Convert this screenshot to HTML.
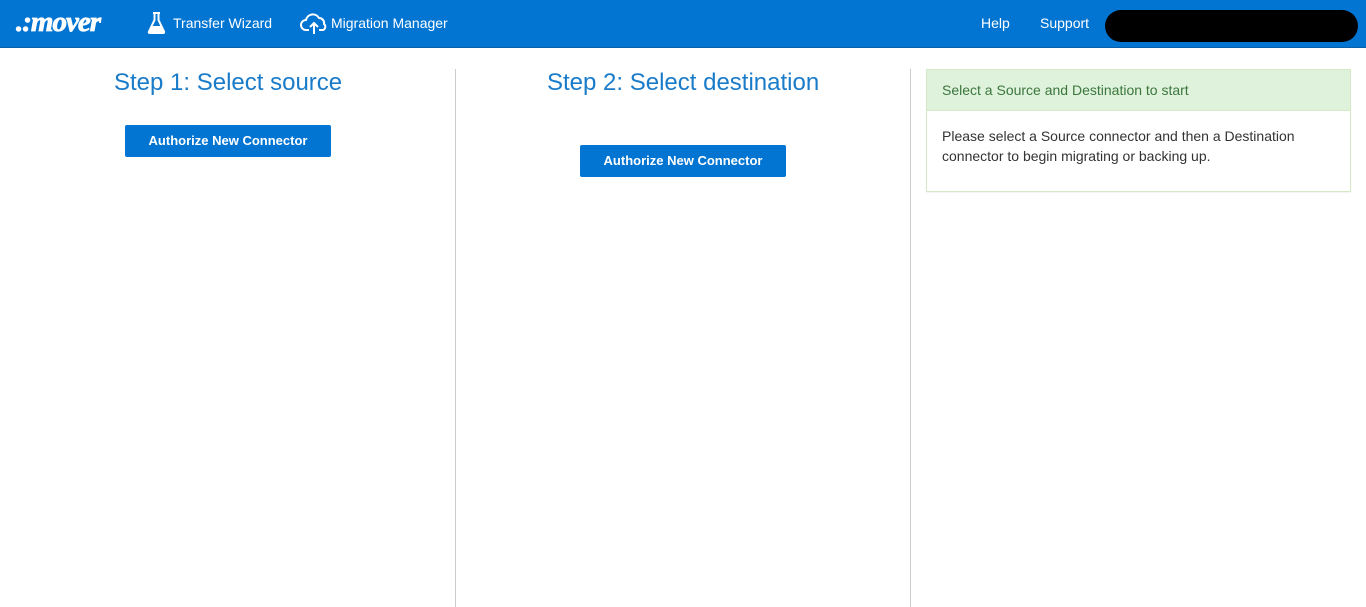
<!DOCTYPE html>
<html><head><style>
body{margin:0;width:1366px;height:607px;overflow:hidden;background:#fff;font-family:"Liberation Sans",sans-serif;position:relative}
.nav{position:absolute;left:0;top:0;width:1366px;height:47px;background:#0275d2;border-bottom:1px solid #0a5fa8;color:#fff;font-size:14px}
.nav span{position:absolute;top:15px}
.logo{position:absolute;left:16px;top:6px;font-size:29px;font-weight:bold;font-style:italic;color:#fff;font-family:"Liberation Serif",serif;letter-spacing:-1px;-webkit-text-stroke:0.8px #fff}
h2{position:absolute;margin:0;font-weight:normal;font-size:24px;color:#1a7bc9}
.btn{position:absolute;background:#0275d2;color:#fff;font-size:13px;font-weight:bold;text-align:center;line-height:32px;height:32px;border-radius:2px}
.vl{position:absolute;top:69px;width:1px;height:538px;background:#ccc}
.panel{position:absolute;left:926px;top:69px;width:423px;height:121px;border:1px solid #d6e9c6;box-shadow:0 1px 1px rgba(0,0,0,.05)}
.ph{height:40px;background:#dff3dc;border-bottom:1px solid #d6e9c6;color:#3c763d;font-size:14px;line-height:41px;padding-left:15px}
.pb{padding:15px 15px;font-size:14px;line-height:20px;color:#333}
</style></head><body>
<div class="nav">
<div class="logo">.:mover</div>
<svg style="position:absolute;left:147px;top:12px" width="19" height="22" viewBox="0 0 19 22"><path d="M6 1h7M7.5 1v7L2 19.5c-.5 1 0 1.5 1 1.5h13c1 0 1.5-.5 1-1.5L11.5 8V1" fill="none" stroke="#fff" stroke-width="2"/><path d="M4.5 14h10l3 6.5H1.5z" fill="#fff"/></svg>
<span style="left:173px">Transfer Wizard</span>
<svg style="position:absolute;left:300px;top:13px" width="28" height="22" viewBox="0 0 28 22"><path d="M9 17H6a5 5 0 0 1 0-10 7 7 0 0 1 13-2 5 5 0 0 1 5 6 3.5 3.5 0 0 1-1 6h-4" fill="none" stroke="#fff" stroke-width="2"/><path d="M14 21V10M10 14l4-4 4 4" fill="none" stroke="#fff" stroke-width="2"/></svg>
<span style="left:331px">Migration Manager</span>
<span style="left:981px">Help</span>
<span style="left:1040px">Support</span>
<div style="position:absolute;left:1105px;top:10px;width:253px;height:32px;background:#000;border-radius:16px"></div>
</div>
<h2 style="left:114px;top:69px">Step 1: Select source</h2>
<div class="btn" style="left:125px;top:125px;width:206px">Authorize New Connector</div>
<div class="vl" style="left:455px"></div>
<h2 style="left:547px;top:69px">Step 2: Select destination</h2>
<div class="btn" style="left:580px;top:145px;width:206px">Authorize New Connector</div>
<div class="vl" style="left:910px"></div>
<div class="panel"><div class="ph">Select a Source and Destination to start</div><div class="pb">Please select a Source connector and then a Destination connector to begin migrating or backing up.</div></div>
</body></html>
